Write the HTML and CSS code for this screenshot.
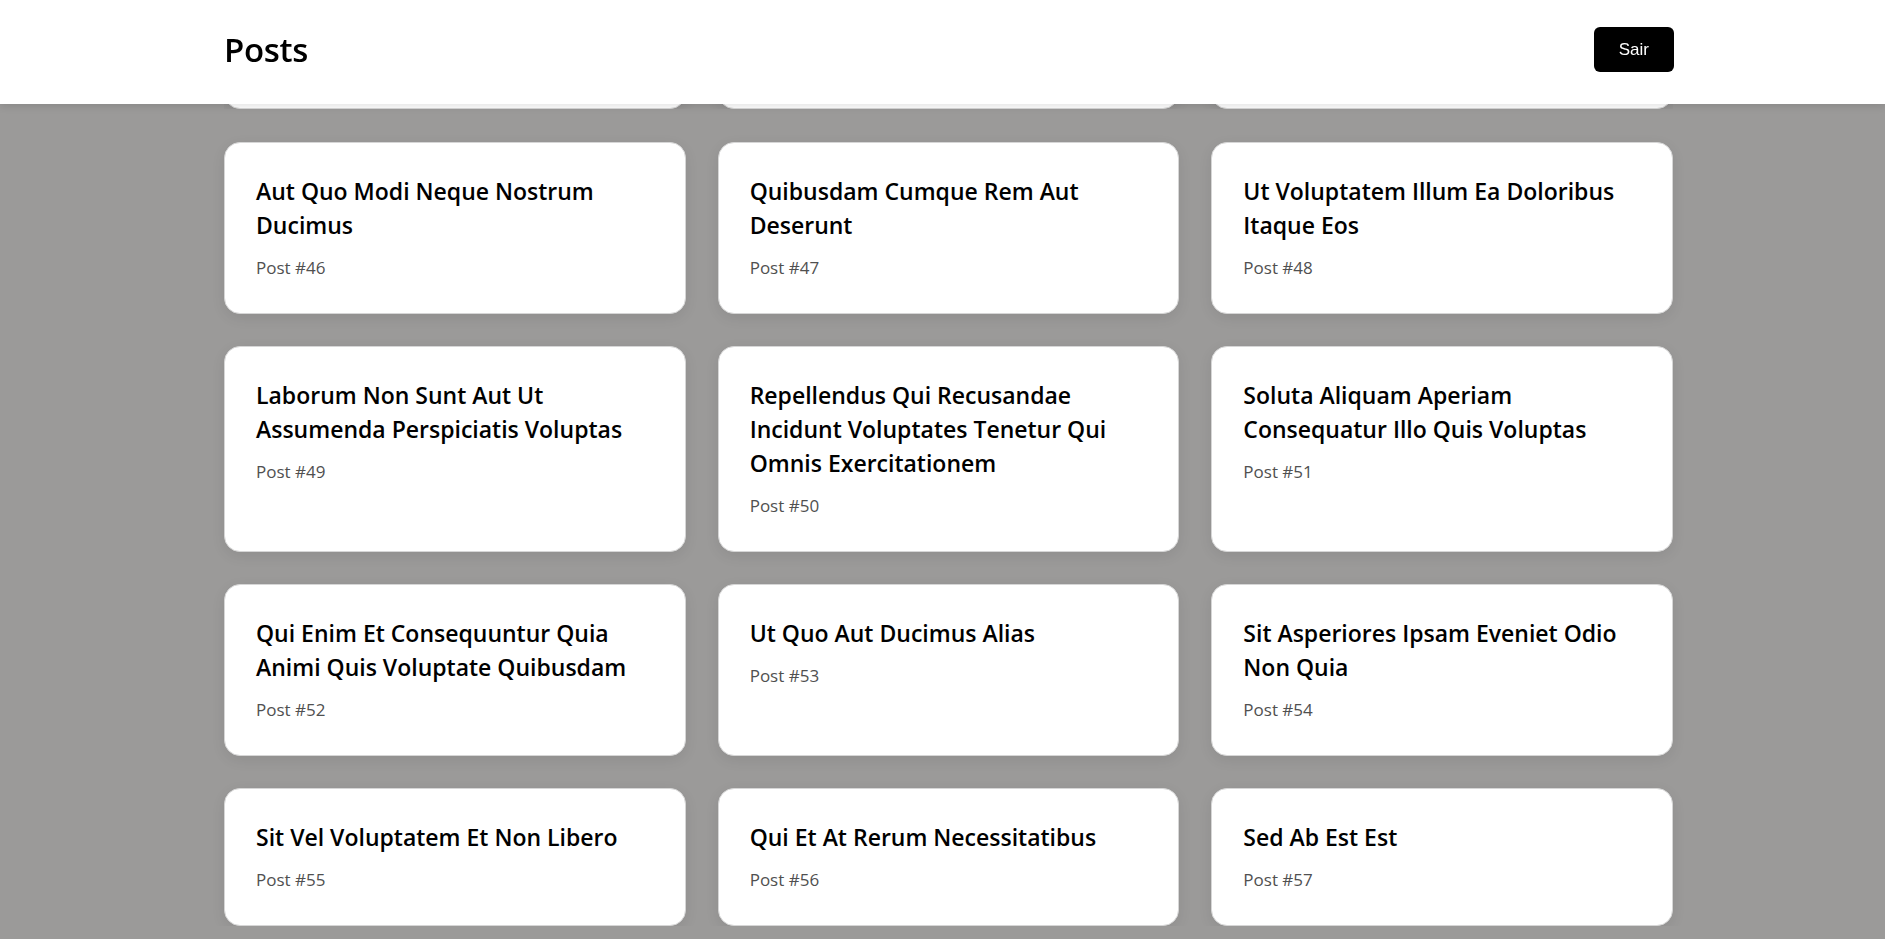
FILE: index.html
```html
<!DOCTYPE html>
<html lang="pt-BR">
<head>
<meta charset="utf-8">
<title>Posts</title>
<link rel="stylesheet" href="styles.css">
</head>
<body>
<header class="topbar">
  <div class="topbar-inner">
    <h1 class="page-title">Posts</h1>
    <button class="logout-btn" type="button">Sair</button>
  </div>
</header>
<main class="content">
  <div class="peek" aria-hidden="true">
    <div class="post-grid">
      <div class="post-card post-card--stub"></div>
      <div class="post-card post-card--stub"></div>
      <div class="post-card post-card--stub"></div>
    </div>
  </div>
  <div class="post-grid">
    <article class="post-card"><h2 class="post-title">Aut Quo Modi Neque Nostrum Ducimus</h2><p class="post-meta">Post #46</p></article>
    <article class="post-card"><h2 class="post-title">Quibusdam Cumque Rem Aut Deserunt</h2><p class="post-meta">Post #47</p></article>
    <article class="post-card"><h2 class="post-title">Ut Voluptatem Illum Ea Doloribus Itaque Eos</h2><p class="post-meta">Post #48</p></article>
    <article class="post-card"><h2 class="post-title">Laborum Non Sunt Aut Ut Assumenda Perspiciatis Voluptas</h2><p class="post-meta">Post #49</p></article>
    <article class="post-card"><h2 class="post-title">Repellendus Qui Recusandae Incidunt Voluptates Tenetur Qui Omnis Exercitationem</h2><p class="post-meta">Post #50</p></article>
    <article class="post-card"><h2 class="post-title">Soluta Aliquam Aperiam Consequatur Illo Quis Voluptas</h2><p class="post-meta">Post #51</p></article>
    <article class="post-card"><h2 class="post-title">Qui Enim Et Consequuntur Quia Animi Quis Voluptate Quibusdam</h2><p class="post-meta">Post #52</p></article>
    <article class="post-card"><h2 class="post-title">Ut Quo Aut Ducimus Alias</h2><p class="post-meta">Post #53</p></article>
    <article class="post-card"><h2 class="post-title">Sit Asperiores Ipsam Eveniet Odio Non Quia</h2><p class="post-meta">Post #54</p></article>
    <article class="post-card"><h2 class="post-title">Sit Vel Voluptatem Et Non Libero</h2><p class="post-meta">Post #55</p></article>
    <article class="post-card"><h2 class="post-title">Qui Et At Rerum Necessitatibus</h2><p class="post-meta">Post #56</p></article>
    <article class="post-card"><h2 class="post-title">Sed Ab Est Est</h2><p class="post-meta">Post #57</p></article>
  </div>
</main>
</body>
</html>
```

FILE: styles.css
```css
* { box-sizing: border-box; }

html, body {
  margin: 0;
  padding: 0;
}

body {
  background: #9b9a99;
  font-family: "Open Sans", "Noto Sans", "DejaVu Sans", sans-serif;
  color: #000;
  overflow: hidden;
}

.topbar {
  position: fixed;
  top: 0;
  left: 0;
  right: 0;
  height: 104px;
  background: #fff;
  box-shadow: 0 2px 8px rgba(0, 0, 0, 0.12);
  z-index: 10;
}

.topbar-inner {
  width: 1450px;
  margin-left: 224px;
  height: 100%;
  padding-bottom: 5px;
  display: flex;
  align-items: center;
  justify-content: space-between;
}

.page-title {
  margin: 0;
  font-size: 33px;
  font-weight: 600;
  line-height: 1.2;
  letter-spacing: -0.3px;
}

.logout-btn {
  height: 45px;
  padding: 0 25px;
  border: 0;
  border-radius: 6px;
  background: #000;
  color: #fff;
  font-family: "Liberation Sans", Arial, sans-serif;
  font-size: 17px;
  cursor: pointer;
}

.content {
  width: 1449px;
  margin-left: 224px;
}

.peek {
  height: 109px;
  display: flex;
  flex-direction: column;
  justify-content: flex-end;
  overflow: hidden;
  margin-bottom: 33px;
}

.post-grid {
  display: grid;
  grid-template-columns: repeat(3, 1fr);
  gap: 32px;
}

.post-card {
  background: #fff;
  border: 1px solid #d6d6d6;
  border-radius: 16px;
  padding: 31px 31px 33px;
  box-shadow: 0 4px 14px rgba(0, 0, 0, 0.08);
}

.post-card--stub {
  height: 172px;
}

.post-title {
  margin: 0 0 14px;
  font-size: 23px;
  font-weight: 600;
  line-height: 34px;
  color: #000;
}

.post-meta {
  margin: 0;
  font-size: 17px;
  line-height: 24px;
  color: #505050;
}
```
